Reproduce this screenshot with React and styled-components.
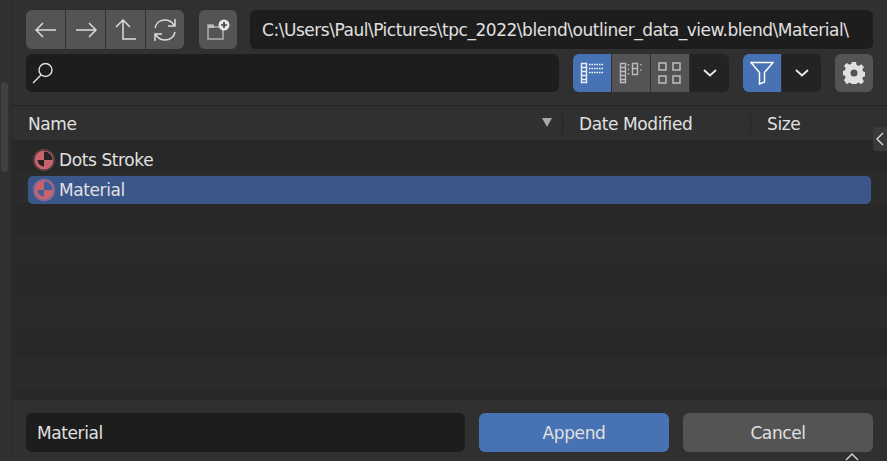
import React from 'react';
import styled, { createGlobalStyle } from 'styled-components';

const Global = createGlobalStyle`
  html, body { margin: 0; padding: 0; background: #303030; }
  * { box-sizing: border-box; }
`;

const Page = styled.div`
  position: relative; width: 887px; height: 461px; overflow: hidden; display: flex;
  background: #303030; color: #e0e0e0;
  font-family: "DejaVu Sans", sans-serif; font-size: 17px; letter-spacing: -0.4px;
`;
const Gutter = styled.div`
  width: 12px; flex: none; padding: 82px 3px 0 1px; border-right: 1px solid #2a2a2a;
`;
const ScrollThumb = styled.div`
  height: 90px; border-radius: 4px; background: #414141;
`;
const Main = styled.div`
  flex: 1; min-width: 0; display: flex; flex-direction: column;
`;
const Header = styled.div`
  height: 106px; flex: none; padding: 10px 14px 0 14px; display: flex; flex-direction: column; gap: 5px;
  border-bottom: 1px solid #242424;
`;
const Row = styled.div`
  display: flex; height: ${p => p.$h || 39}px; align-items: stretch;
`;
const Group = styled.div`
  display: flex; gap: 1px; border-radius: 6px; overflow: hidden; margin-left: ${p => p.$ml || 0}px; flex: none;
`;
const IconBtn = styled.div`
  width: ${p => p.$w || 38}px; display: flex; align-items: center; justify-content: center;
  background: ${p => p.$active ? '#4772b3' : p.$dark ? '#232323' : '#545454'};
  color: #dcdcdc;
`;
const Field = styled.div`
  flex: ${p => p.$w ? 'none' : 1}; width: ${p => p.$w ? p.$w + 'px' : 'auto'}; min-width: 0;
  margin-left: ${p => p.$ml || 0}px;
  display: flex; align-items: center; padding-left: ${p => p.$pl || 12}px;
  background: #1d1d1d; border-radius: 6px; white-space: nowrap; overflow: hidden;
  letter-spacing: ${p => p.$ls || -0.4}px;
`;
const ColHead = styled.div`
  height: 35px; flex: none; display: flex; align-items: center; border-bottom: 1px solid #242424;
  padding-top: 1px;
`;
const Col = styled.div`
  position: relative; display: flex; align-items: center;
  flex: ${p => p.$w ? 'none' : 1}; width: ${p => p.$w ? p.$w + 'px' : 'auto'};
  padding-left: ${p => p.$pl}px;
  border-left: ${p => p.$sep ? '1px solid #262626' : 'none'};
  margin: ${p => p.$sep ? '6px 0' : '0'};
  height: ${p => p.$sep ? '22px' : '100%'};
`;
const SortArrow = styled.div`
  position: absolute; right: 10px; top: 11px; width: 0; height: 0;
  border-left: 5px solid transparent; border-right: 5px solid transparent; border-top: 9px solid #a8a8a8;
`;
const List = styled.div`
  flex: 1; min-height: 0; display: flex; flex-direction: column; background: #282828; overflow: hidden;
`;
const Stripe = styled.div`
  height: 31px; flex: none; padding: 0 16px; background: ${p => p.$odd ? '#2b2b2b' : '#282828'};
`;
const Entry = styled.div`
  position: relative;
  height: 28px; margin-top: ${p => p.$mt}px; display: flex; align-items: center; gap: 3px; padding-left: 4px; border-radius: 5px;
  background: ${p => p.$selected ? '#3b5689' : 'transparent'};
`;
const Footer = styled.div`
  height: 61px; flex: none; padding: 13px 14px 0; display: flex; gap: 14px; align-items: flex-start;
`;
const Input = styled(Field)`
  flex: none; width: 439px; height: 39px;
`;
const Action = styled.div`
  width: 190px; flex: none; height: 39px; border-radius: 6px; display: flex; align-items: center; justify-content: center;
  background: ${p => p.$primary ? '#4772b3' : '#545454'};
`;
const SideTab = styled.div`
  position: absolute; right: 0; top: 127px; width: 14px; height: 24px; background: #3a3a3a;
  border-radius: 4px 0 0 4px; display: flex; align-items: center; justify-content: center;
`;
const BottomTab = styled.div`
  position: absolute; left: 843px; top: 452px; display: flex;
`;

const S = { fill: 'none', stroke: 'currentColor', strokeWidth: 1.5 };
const Back = () => <svg width="22" height="16" viewBox="0 0 22 16" {...S}><path d="M1 8h20M8 1 1 8l7 7" /></svg>;
const Fwd = () => <svg width="22" height="16" viewBox="0 0 22 16" {...S}><path d="M1 8h20M14 1l7 7-7 7" /></svg>;
const Up = () => <svg width="22" height="24" viewBox="0 0 22 24" {...S}><path d="M1 9 8 2l7 7M8 2v19h13" /></svg>;
const Refresh = () => <svg width="24" height="24" viewBox="0 0 24 24" {...S}><path d="M2 10C3 5 7 2 12 2c4 0 7 2 9 5M22 1v7h-7M22 14c-1 5-5 8-10 8-4 0-7-2-9-5M2 23v-7h7" /></svg>;
const NewFolder = () => (
  <svg width="24" height="22" viewBox="0 0 24 22" fill="none">
    <path d="M2 6h5l1 2h9v12H2z" stroke="#c8c8c8" strokeWidth="1.5" opacity=".8" />
    <path d="M2 6h6v3H2z" fill="#bdbdbd" />
    <circle cx="18" cy="6" r="5.5" fill="#e6e6e6" />
    <path d="M18 3v6M15 6h6" stroke="#444" strokeWidth="1.7" />
  </svg>
);
const Search = () => <svg width="24" height="24" viewBox="0 0 24 24" {...S} strokeWidth="1.4"><circle cx="14.5" cy="9" r="6.5" /><path d="M10 14 2 22" /></svg>;
const ListView = () => (
  <svg width="24" height="22" viewBox="0 0 24 22" fill="none">
    <path d="M1.5 1.500h5v19h-5zM1.500 5.500h5M1.500 9.500h5M1.500 13.500h5M1.500 17.500h5" stroke="#e8eef8" strokeWidth="1.4" />
    <path d="M9 2.500h14M9 6.500h14M9 10.500h14" stroke="#fff" strokeWidth="1.4" strokeDasharray="1.500 1" />
  </svg>
);
const ColsView = () => (
  <svg width="24" height="22" viewBox="0 0 24 22" fill="none" stroke="#bdbdbd" strokeWidth="1.4">
    <path d="M1.500 1.500h5v19h-5zM1.500 5.500h5M1.500 9.500h5M1.500 13.500h5M1.500 17.500h5M13.500 1.500h5v11h-5zM13.500 6.500h5" />
    <path d="M9.500 2v1.500M9.500 6.500V8M9.500 11v1.500M22 2v1.500M22 7.500V9" />
  </svg>
);
const GridView = () => (
  <svg width="24" height="22" viewBox="0 0 24 22" fill="none" stroke="#bdbdbd" strokeWidth="1.5">
    <path d="M1 1h7v7H1zM15 1h7v7h-7zM1 14h7v7H1zM15 14h7v7h-7z" />
  </svg>
);
const Chev = () => <svg width="14" height="8" viewBox="0 0 14 8" fill="none" stroke="#e6e6e6" strokeWidth="2"><path d="m1 1 6 5.500L13 1" /></svg>;
const Funnel = () => <svg width="24" height="24" viewBox="0 0 24 24" fill="none" stroke="#fff" strokeWidth="1.500"><path d="M1 1.500h22l-8.500 10V21l-5 2V11.500z" /></svg>;
const Gear = () => (
  <svg width="22" height="22" viewBox="0 0 22 22">
    <path fill="#e0e0e0" fillRule="evenodd" d="M9 0h4l.6 3 2 .9 2.600-1.700 2.800 2.800-1.700 2.600.9 2 3 .6v4l-3 .6-.9 2 1.700 2.600-2.800 2.800-2.600-1.700-2 .9-.6 3H9l-.6-3-2-.9-2.600 1.700L1 18.200l1.700-2.600-.9-2-3-.6V9l3-.6.9-2L1 3.800 3.800 1l2.600 1.700 2-.9zM11 7.500a3.500 3.500 0 1 0 0 7 3.500 3.500 0 0 0 0-7z" />
  </svg>
);
const MaterialIcon = ({ selected }) => {
  const dark = selected ? '#3f5f9a' : '#262324';
  return (
    <svg width="24" height="24" viewBox="0 0 24 24">
      <circle cx="12" cy="12" r="11.200" fill={selected ? '#7d6a96' : '#4e3c3e'} />
      <circle cx="12" cy="12" r="9.400" fill="#c9626c" />
      <path d="M12 12V3.500A8.500 8.500 0 0 1 20.500 12z" fill={dark} />
      <path d="M12 12v6.500A6.500 6.500 0 0 1 5.500 12z" fill={dark} />
    </svg>
  );
};

export default function App() {
  return (
    <Page>
      <Global />
      <Gutter><ScrollThumb /></Gutter>
      <Main>
        <Header>
          <Row>
            <Group>
              <IconBtn $w={39}><Back /></IconBtn>
              <IconBtn $w={39}><Fwd /></IconBtn>
              <IconBtn $w={39}><Up /></IconBtn>
              <IconBtn $w={38}><Refresh /></IconBtn>
            </Group>
            <Group $ml={15}><IconBtn><NewFolder /></IconBtn></Group>
            <Field $ml={13} $ls={-0.47}>C:\Users\Paul\Pictures\tpc_2022\blend\outliner_data_view.blend\Material\</Field>
          </Row>
          <Row $h={38}>
            <Field $pl={5} $w={533}><Search /></Field>
            <Group $ml={14}>
              <IconBtn $active><ListView /></IconBtn>
              <IconBtn><ColsView /></IconBtn>
              <IconBtn><GridView /></IconBtn>
              <IconBtn $dark $w={39}><Chev /></IconBtn>
            </Group>
            <Group $ml={14}>
              <IconBtn $active><Funnel /></IconBtn>
              <IconBtn $dark $w={39}><Chev /></IconBtn>
            </Group>
            <Group $ml={14}>
              <IconBtn><Gear /></IconBtn>
            </Group>
          </Row>
        </Header>
        <ColHead>
          <Col $pl={16}>Name<SortArrow /></Col>
          <Col $sep $w={188} $pl={16}>Date Modified</Col>
          <Col $sep $w={137} $pl={16}>Size</Col>
        </ColHead>
        <List>
          <Stripe><Entry $mt={5}><MaterialIcon />Dots Stroke</Entry></Stripe>
          <Stripe $odd><Entry $mt={4} $selected><MaterialIcon selected />Material</Entry></Stripe>
          <Stripe />
          <Stripe $odd />
          <Stripe />
          <Stripe $odd />
          <Stripe />
          <Stripe $odd />
          <Stripe />
        </List>
        <Footer>
          <Input $pl={11}>Material</Input>
          <Action $primary>Append</Action>
          <Action>Cancel</Action>
        </Footer>
      </Main>
      <SideTab>
        <svg width="8" height="14" viewBox="0 0 8 14" fill="none" stroke="#d0d0d0" strokeWidth="1.500"><path d="M7 1 1 7l6 6" /></svg>
      </SideTab>
      <BottomTab>
        <svg width="18" height="9" viewBox="0 0 18 9" fill="none" stroke="#d0d0d0" strokeWidth="1.500"><path d="m3 8 6-6 6 6" /></svg>
      </BottomTab>
    </Page>
  );
}
